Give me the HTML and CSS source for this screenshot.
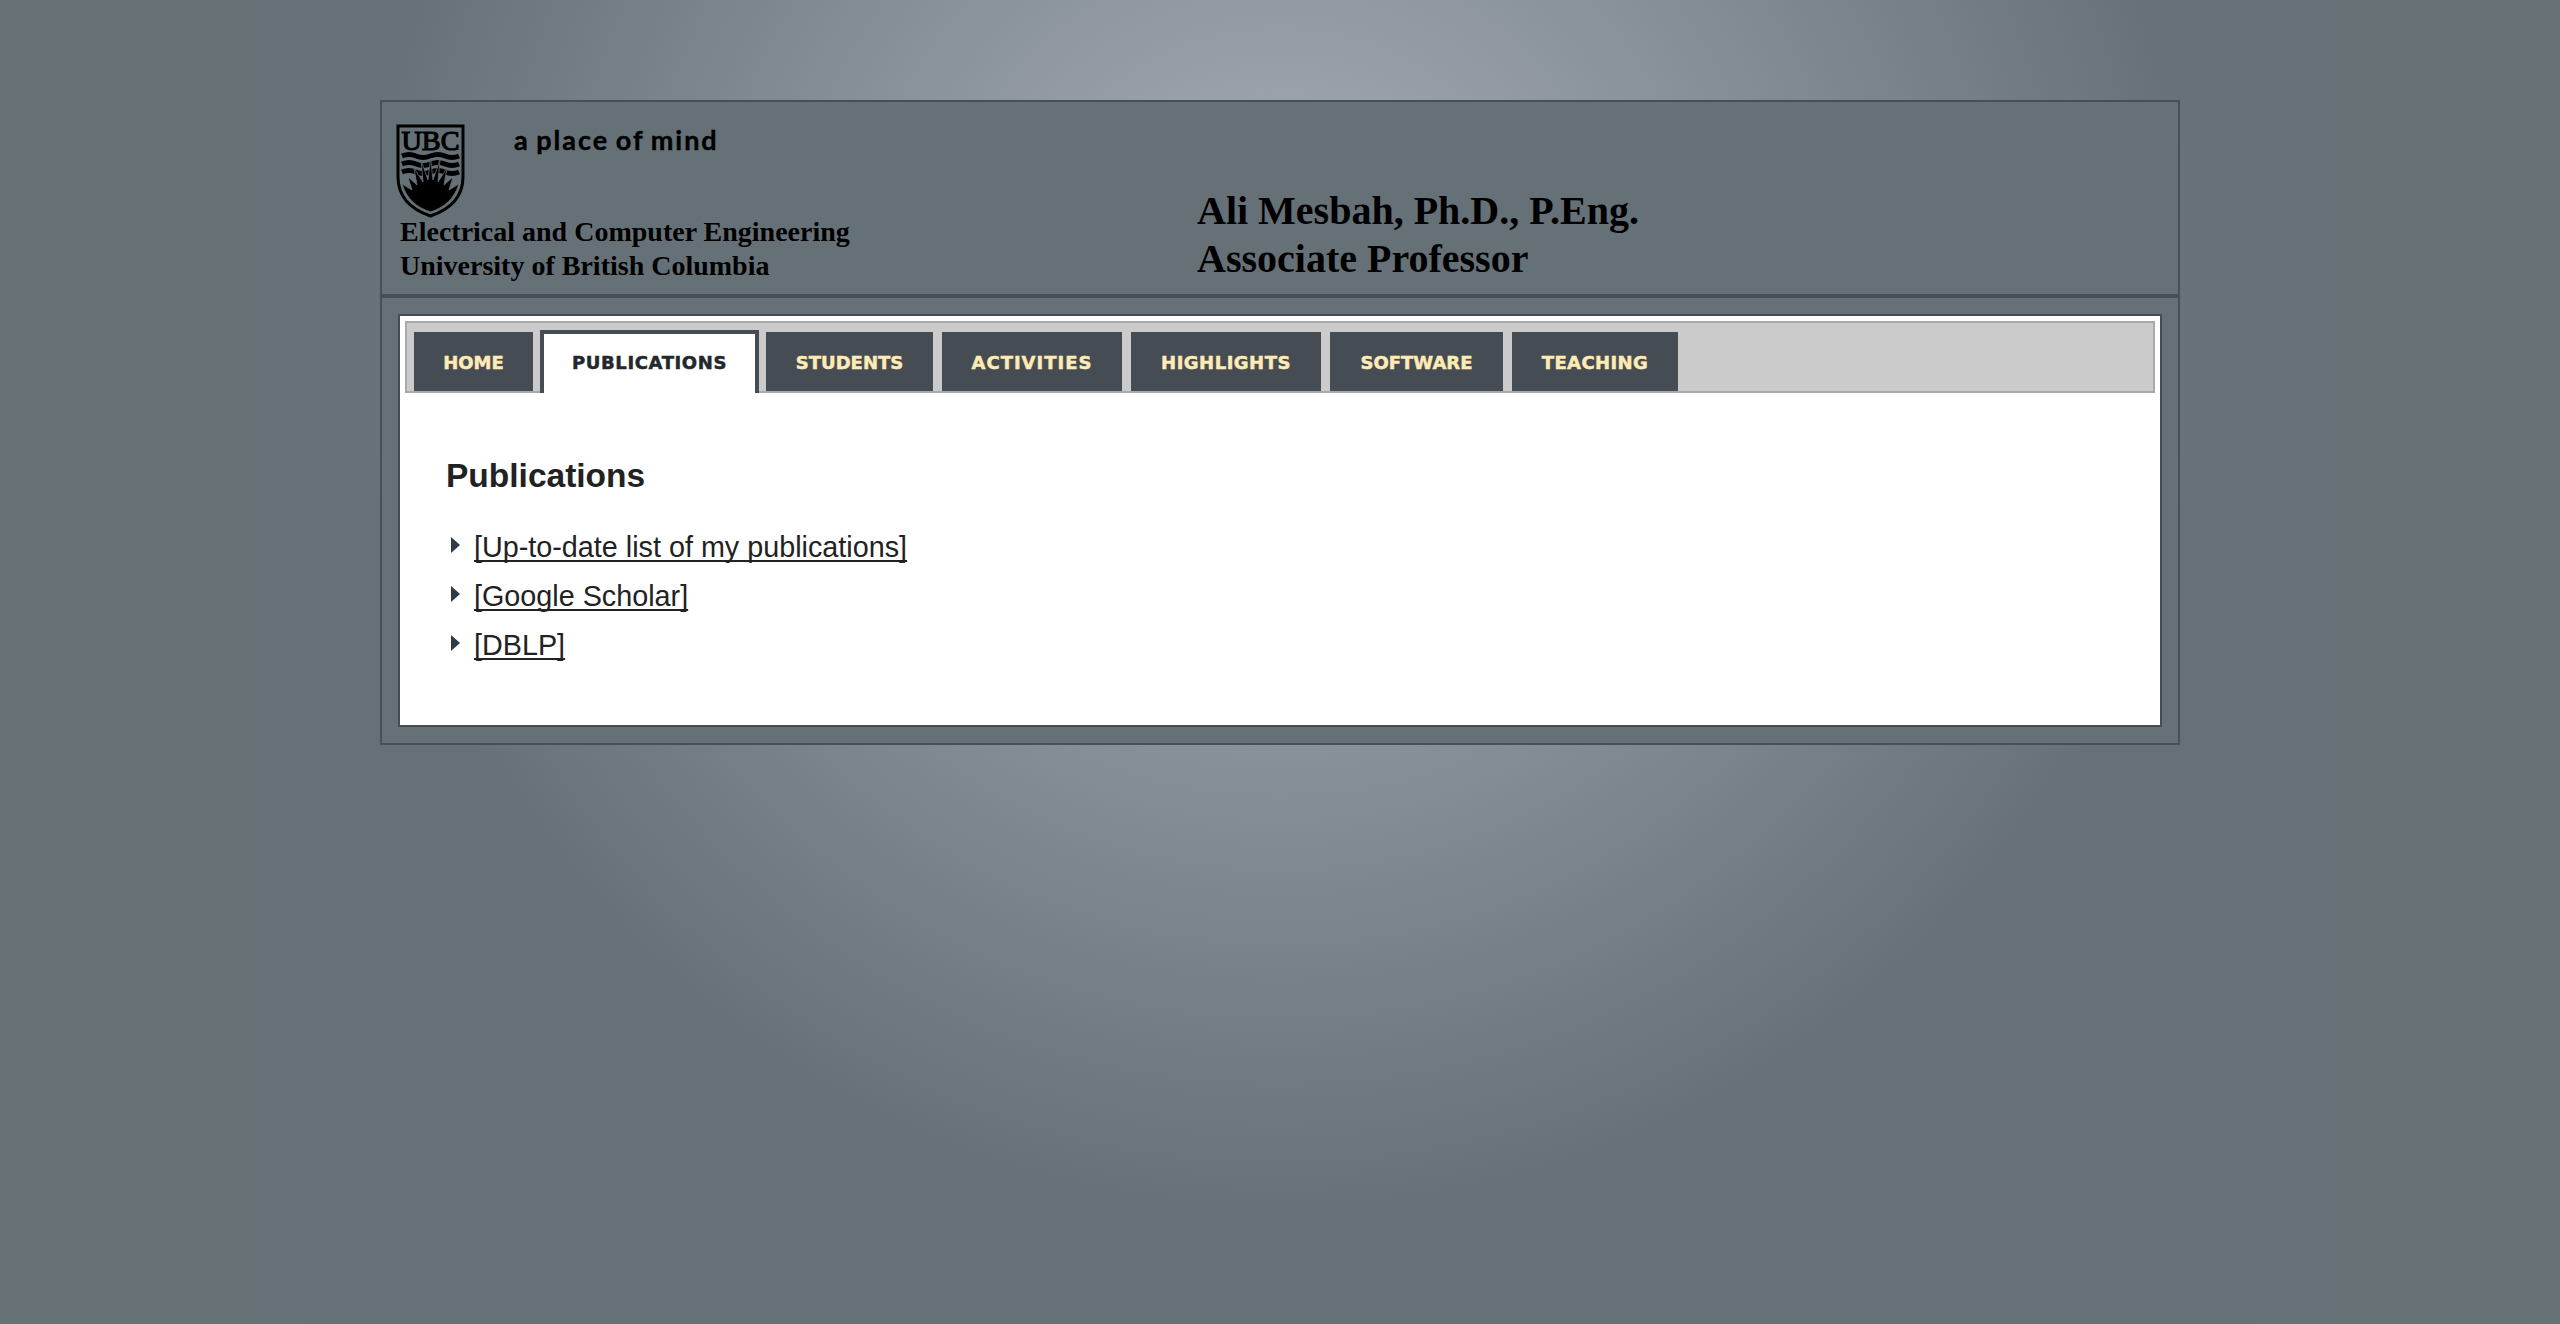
FILE: index.html
```html
<!DOCTYPE html>
<html lang="en">
<head>
<meta charset="utf-8">
<title>Ali Mesbah - Publications</title>
<link rel="stylesheet" href="styles.css">
</head>
<body>
<div class="page">
  <header class="header">
    <div class="affiliation">
      <div class="brand">
        <svg class="crest" viewBox="0 0 70 96" role="img" aria-label="UBC crest">
          <path class="outline" d="M2 2H67V53C67 75 52 86 34.500 92C17 86 2 75 2 53Z"/>
          <text x="34.500" y="26" textLength="58" lengthAdjust="spacingAndGlyphs">UBC</text>
          <path class="wave" d="M6 32Q13 29 20 32T34.500 32T49 32T63 32"/>
          <path class="wave" d="M6 40Q13 37 20 40T34.500 40T49 40T63 40"/>
          <path class="wave" d="M6 48Q13 45 20 48T34.500 48T49 48T63 48"/>
          <path class="sun" d="M6 60L16 66L12 53L21 61L18 44L27 58L25 36L32 56L34.500 34L37 56L44 36L42 58L51 44L48 61L57 53L53 66L63 60C58 75 49 83 34.500 88C20 83 11 75 6 60Z"/>
        </svg>
        <p class="tagline">a place of mind</p>
      </div>
      <p class="dept">Electrical and Computer Engineering<br>University of British Columbia</p>
    </div>
    <h1 class="name">Ali Mesbah, Ph.D., P.Eng.<br>Associate Professor</h1>
  </header>
  <main class="content">
    <nav class="tabs">
      <a class="tab home">HOME</a>
      <a class="tab active">PUBLICATIONS</a>
      <a class="tab students">STUDENTS</a>
      <a class="tab activities">ACTIVITIES</a>
      <a class="tab highlights">HIGHLIGHTS</a>
      <a class="tab software">SOFTWARE</a>
      <a class="tab teaching">TEACHING</a>
    </nav>
    <h2 class="title">Publications</h2>
    <ul class="links">
      <li><a>[Up-to-date list of my publications]</a></li>
      <li><a>[Google Scholar]</a></li>
      <li><a>[DBLP]</a></li>
    </ul>
  </main>
</div>
</body>
</html>
```
FILE: styles.css
```css
* { box-sizing: border-box; margin: 0; padding: 0; }
html { height: 100%; }
body {
  min-height: 1324px;
  padding-top: 100px;
  background:
    radial-gradient(circle 930px at 1280px 300px, #a8aeb5 0, rgba(102, 112, 121, 0) 100%) no-repeat,
    linear-gradient(90deg, #677277 240px, #667079 310px, #667079 2250px, #677277 2340px);
}
.page {
  width: 1800px;
  height: 645px;
  margin: 0 auto;
  border: 2px solid #475059;
  background: #667177;
}
.header {
  display: flex;
  height: 196px;
  border-bottom: 4px solid #474e57;
  color: #000;
  font-family: "Liberation Serif", serif;
  font-weight: bold;
}
.affiliation { width: 815px; padding: 22px 0 0 14px; }
.brand { display: flex; height: 91px; }
.crest { width: 70px; height: 96px; }
.outline { fill: none; stroke: #000; stroke-width: 3; }
.crest text { font: 28px "Liberation Serif", serif; text-anchor: middle; stroke: #000; stroke-width: 1.200px; }
.wave { fill: none; stroke: #000; stroke-width: 4.800; }
.sun { fill: #000; stroke: #667177; stroke-width: .8; }
.tagline {
  margin-left: 48px;
  font: 700 27px/31px Lato, sans-serif;
  -webkit-text-stroke: .4px;
  letter-spacing: 2px;
  word-spacing: -2px;
}
.dept { padding-left: 4px; font-size: 28px; line-height: 34px; }
.name { padding-top: 85px; font-size: 40px; line-height: 48px; }
.content {
  width: 1764px;
  height: 413px;
  margin: 16px auto 0;
  padding: 5px;
  border: 2px solid #444c55;
  background: #fff;
}
.tabs {
  display: flex;
  height: 72px;
  padding: 9px 0 0 7px;
  border: 2px solid #a7a9ab;
  background: #cbcbcb;
}
.tab {
  height: 59px;
  margin-right: 9px;
  background: #464c53;
  color: #ffebb5;
  font: bold 18px/61px "DejaVu Sans", sans-serif;
  -webkit-text-stroke: .5px;
  text-align: center;
}
.home { width: 119px; margin-right: 7px; }
.active {
  width: 219px;
  height: 63px;
  margin: -2px 7px 0 0;
  border: 4px solid #464c53;
  border-bottom: 0;
  background: #fff;
  color: #22282c;
  line-height: 57px;
  letter-spacing: .600px;
}
.students { width: 167px; }
.activities { width: 180px; letter-spacing: 1px; }
.highlights { width: 190px; letter-spacing: .500px; }
.software { width: 173px; }
.teaching { width: 166px; letter-spacing: .400px; }
.title {
  margin: 63px 0 0 41px;
  color: #222;
  font: bold 33.500px/40px "Liberation Sans", sans-serif;
}
.links {
  margin: 27px 0 0 46px;
  list-style: none;
  color: #222;
  font: 28.750px/49px "Liberation Sans", sans-serif;
}
.links li { display: flex; align-items: center; }
.links li::before {
  content: "";
  margin: -5px 14px 0 0;
  border: solid transparent;
  border-width: 8px 0 8px 9px;
  border-left-color: #2c3b45;
}
.links a {
  text-decoration: underline;
  text-decoration-thickness: 2px;
  text-decoration-skip-ink: none;
  text-underline-offset: 3px;
}
```
